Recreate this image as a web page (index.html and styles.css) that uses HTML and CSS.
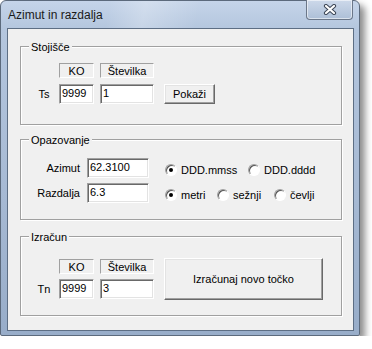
FILE: index.html
```html
<!DOCTYPE html>
<html lang="sl">
<head>
    <meta charset="UTF-8">
    <title>Azimut in razdalja</title>
    <link rel="stylesheet" href="styles.css">
</head>
<body>
    <div class="window">
        <div class="titlebar">
            <span class="title">Azimut in razdalja</span>
            <button class="close" aria-label="Zapri">
                <svg width="14" height="11" viewBox="0 0 14 11">
                    <path d="M3 2 L11 9 M11 2 L3 9" stroke="#3c4656" stroke-width="4.2" stroke-linecap="round"/>
                    <path d="M3 2 L11 9 M11 2 L3 9" stroke="#fff" stroke-width="2.2" stroke-linecap="round"/>
                </svg>
            </button>
        </div>
        <div class="client">
            <div class="group group-station">
                <span class="group-title">Stojišče</span>
                <div class="point-grid">
                    <span></span>
                    <span class="static">KO</span>
                    <span class="static">Številka</span>
                    <span></span>
                    <span class="row-label">Ts</span>
                    <input class="field" value="9999">
                    <input class="field" value="1">
                    <button class="btn btn-show">Pokaži</button>
                </div>
            </div>

            <div class="group group-obs">
                <span class="group-title">Opazovanje</span>
                <div class="obs-grid">
                    <span class="obs-label">Azimut</span>
                    <input class="field field-wide" value="62.3100">
                    <div class="radios">
                        <span class="radio radio-mmss"><span class="dot checked"></span>DDD.mmss</span>
                        <span class="radio"><span class="dot"></span>DDD.dddd</span>
                    </div>
                    <span class="obs-label">Razdalja</span>
                    <input class="field field-wide" value="6.3">
                    <div class="radios">
                        <span class="radio radio-metri"><span class="dot checked"></span>metri</span>
                        <span class="radio radio-seznji"><span class="dot"></span>sežnji</span>
                        <span class="radio"><span class="dot"></span>čevlji</span>
                    </div>
                </div>
            </div>

            <div class="group group-calc">
                <span class="group-title">Izračun</span>
                <div class="point-grid">
                    <span></span>
                    <span class="static">KO</span>
                    <span class="static">Številka</span>
                    <button class="btn btn-calc">Izračunaj novo točko</button>
                    <span class="row-label">Tn</span>
                    <input class="field" value="9999">
                    <input class="field" value="3">
                </div>
            </div>
        </div>
    </div>
</body>
</html>
```

FILE: styles.css
```css
body {
    margin: 0;
    background: #fff;
    font-family: 'Liberation Sans', Arial, sans-serif;
    font-size: 11px;
    color: #000;
}

.window {
    width: 360px;
    height: 336px;
    box-sizing: border-box;
    border: 1px solid #5c6a7c;
    border-radius: 6px 6px 2px 2px;
    background: linear-gradient(to bottom, #c5d4e9 0, #b4c6de 28px, #a6b9d3 60%, #98adc9 100%);
    box-shadow: 5px 5px 7px rgba(0, 0, 0, 0.45);
}

.titlebar {
    display: flex;
    align-items: flex-start;
    height: 27px;
    background: linear-gradient(100deg, rgba(255, 255, 255, 0) 30%, rgba(255, 255, 255, 0.25) 40%, rgba(255, 255, 255, 0) 55%);
}

.title {
    padding: 7px 0 0 7px;
    font-size: 12px;
    line-height: 14px;
    color: #1a1a1a;
}

.close {
    margin: -1px 6px 0 auto;
    width: 47px;
    height: 20px;
    padding: 0;
    border: 1px solid #6b7789;
    border-top: none;
    border-radius: 0 0 4px 4px;
    background: linear-gradient(to bottom, #cdd9ea, #adbfd7);
    box-shadow: inset 0 0 0 1px rgba(255, 255, 255, 0.55);
    display: flex;
    justify-content: center;
    align-items: center;
}

.client {
    margin: 0 5px 0 6px;
    height: 303px;
    box-sizing: border-box;
    border: 1px solid #5d6e84;
    background: #f0f0f0;
    padding: 17px 11px 0 12px;
}

.group {
    position: relative;
    border: 1px solid #a0a0a0;
    box-shadow: inset 1px 1px 0 #fff, 1px 1px 0 #fff;
}

.group-title {
    position: absolute;
    top: -6px;
    left: 8px;
    padding: 0 2px;
    line-height: 13px;
    background: #f0f0f0;
}

.group-station {
    padding: 16px 0 20px;
    margin-bottom: 14px;
}

.group-obs {
    padding: 18px 0 16px;
    margin-bottom: 16px;
}

.group-calc {
    padding: 22px 0 16px;
}

.point-grid {
    display: grid;
    grid-template-columns: 32px 35px 54px 55px;
    grid-template-rows: 15px 20px;
    column-gap: 6px;
    row-gap: 6px;
}

.group-calc .point-grid {
    row-gap: 5px;
}

.row-label {
    padding-left: 14px;
    text-align: center;
    align-self: center;
}

.static {
    box-sizing: border-box;
    border: 1px solid;
    border-color: #a0a0a0 #fff #fff #a0a0a0;
    text-align: center;
    line-height: 14px;
}

.field {
    box-sizing: border-box;
    width: 100%;
    height: 20px;
    margin: 0;
    padding: 0 2px 2px;
    border: 1px solid;
    border-color: #a0a0a0 #fff #fff #a0a0a0;
    box-shadow: inset 1px 1px 0 #696969, inset -1px -1px 0 #e3e3e3;
    background: #fff;
    font: 11px 'Liberation Sans', Arial, sans-serif;
    color: #000;
    outline: none;
}

.btn {
    box-sizing: border-box;
    margin: 0;
    padding: 0;
    border: 1px solid;
    border-color: #fff #696969 #696969 #fff;
    box-shadow: inset -1px -1px 0 #a0a0a0, inset 1px 1px 0 #e3e3e3;
    background: #f0f0f0;
    font: 11px 'Liberation Sans', Arial, sans-serif;
    color: #000;
}

.btn-show {
    margin-left: 4px;
    height: 20px;
}

.btn-calc {
    grid-row: 1 / 3;
    grid-column: 4;
    width: 159px;
    height: 42px;
    margin-left: 4px;
    align-self: center;
}

.obs-grid {
    display: grid;
    grid-template-columns: 59px 62px auto;
    grid-template-rows: 20px 20px;
    column-gap: 7px;
    row-gap: 5px;
}

.obs-label {
    text-align: right;
    align-self: center;
}

.radios {
    display: flex;
    align-items: center;
    margin-left: 9px;
    padding-top: 4px;
}

.radio {
    display: flex;
    align-items: center;
    gap: 4px;
}

.radio-mmss {
    width: 83px;
}

.radio-metri {
    width: 52px;
}

.radio-seznji {
    width: 57px;
}

.dot {
    box-sizing: border-box;
    width: 12px;
    height: 12px;
    border: 1px solid;
    border-color: #a0a0a0 #fff #fff #a0a0a0;
    border-radius: 50%;
    background: #fff;
    box-shadow: inset 1px 1px 0 #555;
    display: flex;
    justify-content: center;
    align-items: center;
}

.dot.checked::after {
    content: '';
    width: 4px;
    height: 4px;
    border-radius: 50%;
    background: #000;
}
```
